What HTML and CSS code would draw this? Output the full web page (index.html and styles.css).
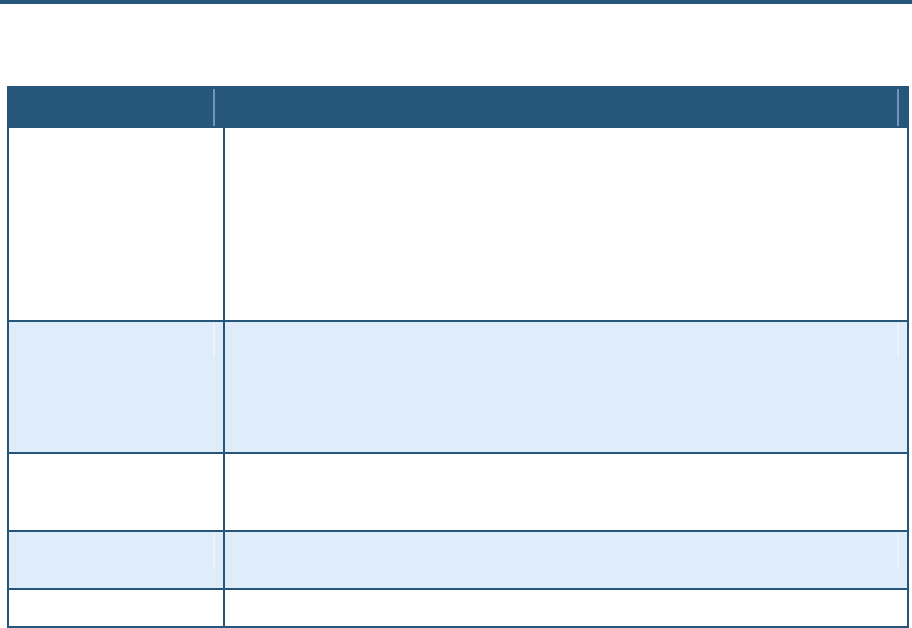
FILE: index.html
```html
<!DOCTYPE html>
<html lang="en">
<head>
<meta charset="utf-8">
<title>Table</title>
<link rel="stylesheet" href="styles.css">
</head>
<body>
<div class="topbar"></div>
<main class="page">
  <div class="table">
    <div class="thead">
      <div class="th th-first"></div>
      <div class="th th-second"></div>
    </div>
    <div class="tr h1">
      <div class="td td-first"></div>
      <div class="td td-second"></div>
    </div>
    <div class="tr h2 alt">
      <div class="td td-first"></div>
      <div class="td td-second"></div>
    </div>
    <div class="tr h3">
      <div class="td td-first"></div>
      <div class="td td-second"></div>
    </div>
    <div class="tr h4 alt">
      <div class="td td-first"></div>
      <div class="td td-second"></div>
    </div>
    <div class="tr h5">
      <div class="td td-first"></div>
      <div class="td td-second"></div>
    </div>
  </div>
</main>
</body>
</html>
```
FILE: styles.css
```css
* { box-sizing: border-box; }
html, body {
  margin: 0;
  padding: 0;
  background: #ffffff;
  font-family: "Liberation Sans", Arial, sans-serif;
  overflow: hidden;
}
.topbar {
  height: 4px;
  background: #27567b;
}
.page {
  padding: 82px 0 0 7px;
}
.table {
  width: 902px;
}
.thead {
  display: flex;
  height: 42px;
  background: #27567b;
}
.th {
  position: relative;
  height: 100%;
}
.th::after {
  content: "";
  position: absolute;
  top: 3px;
  bottom: 2px;
  right: 10px;
  width: 2px;
  background: #7196ba;
}
.th-first { width: 218px; }
.th-second { flex: 1; }

.tr {
  display: flex;
  border-left: 2px solid #27567b;
  border-right: 2px solid #27567b;
  border-bottom: 2px solid #27567b;
  background: #ffffff;
}
.tr.alt { background: #deedf9; }
.td {
  position: relative;
}
.td-first {
  width: 216px;
  border-right: 2px solid #27567b;
}
.td-second { flex: 1; }
.tr.alt .td::after {
  content: "";
  position: absolute;
  top: 1px;
  height: 34px;
  right: 8px;
  width: 2px;
  background: #eaf4fc;
}
.h1 { height: 194px; }
.h2 { height: 132px; }
.h3 { height: 78px; }
.h4 { height: 58px; }
.h5 { height: 38px; }
```
